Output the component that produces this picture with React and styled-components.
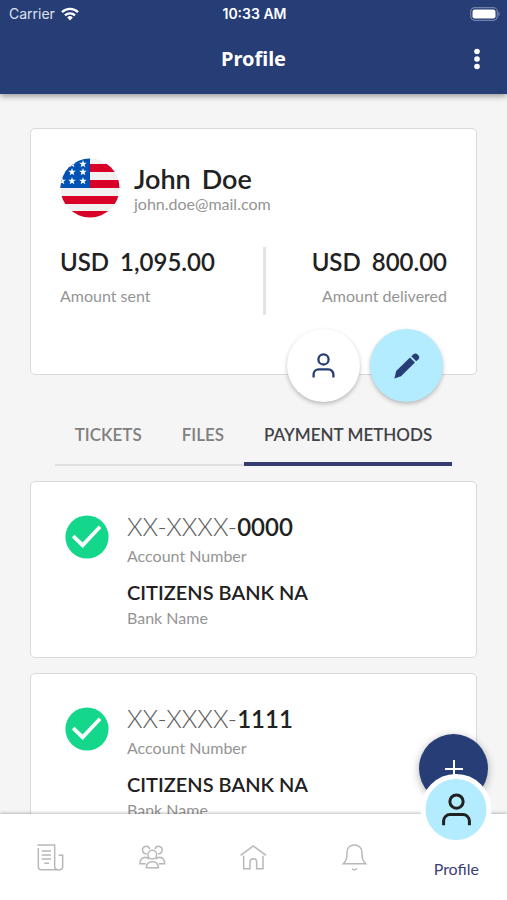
import { useState } from "react";
import styled, { createGlobalStyle } from "styled-components";

const accounts = [
  { id: 1, digits: "0000", bank: "CITIZENS BANK NA" },
  { id: 2, digits: "1111", bank: "CITIZENS BANK NA" },
];
const tabs = ["TICKETS", "FILES", "PAYMENT METHODS"];
const starPoints = [
  [12, 6],
  [23, 6],
  [12, 14],
  [23, 14],
  [2, 23],
  [12, 23],
  [23, 23],
];

export default function App() {
  const [tab, setTab] = useState("PAYMENT METHODS");
  return (
    <Screen>
      <GlobalStyle />
      <Header>
        <StatusBar>
          <Carrier>
            Carrier
            <WifiIcon />
          </Carrier>
          <Time>10:33 AM</Time>
          <BatteryIcon />
        </StatusBar>
        <TitleBar>
          <Title>Profile</Title>
          <MenuButton aria-label="More options">
            <svg width="6" height="22" viewBox="0 0 6 22" fill="#fff">
              <circle cx="3" cy="3.5" r="2.8" />
              <circle cx="3" cy="11" r="2.8" />
              <circle cx="3" cy="18.5" r="2.8" />
            </svg>
          </MenuButton>
        </TitleBar>
      </Header>
      <Content>
        <SummaryCard>
          <User>
            <FlagIcon />
            <div>
              <Name>
                <span>John</span> <span>Doe</span>
              </Name>
              <Label>john.doe@mail.com</Label>
            </div>
          </User>
          <Amounts>
            <Amount>
              <Money>
                <span>USD</span> <span>1,095.00</span>
              </Money>
              <Label>Amount sent</Label>
            </Amount>
            <Amount $right>
              <Money>
                <span>USD</span> <span>800.00</span>
              </Money>
              <Label>Amount delivered</Label>
            </Amount>
          </Amounts>
          <Actions>
            <RoundButton aria-label="View profile">
              <PersonIcon width="23" height="25" />
            </RoundButton>
            <RoundButton $filled aria-label="Edit profile">
              <PencilIcon />
            </RoundButton>
          </Actions>
        </SummaryCard>
        <Tabs role="tablist">
          {tabs.map((name) => (
            <Tab
              key={name}
              role="tab"
              aria-selected={tab === name}
              $active={tab === name}
              onClick={() => setTab(name)}
            >
              {name}
            </Tab>
          ))}
        </Tabs>
        <AccountList>
          {accounts.map((account) => (
            <AccountCard key={account.id}>
              <CheckIcon />
              <div>
                <AccountNumber>
                  XX-XXXX-<b>{account.digits}</b>
                </AccountNumber>
                <Label>Account Number</Label>
                <BankName>{account.bank}</BankName>
                <Label>Bank Name</Label>
              </div>
            </AccountCard>
          ))}
        </AccountList>
      </Content>
      <Footer>
        <AddButton aria-label="Add payment method">
          <svg width="18" height="18" viewBox="0 0 18 18" stroke="#fff" strokeWidth="2">
            <path d="M9 0v18M0 9h18" />
          </svg>
        </AddButton>
        <Nav>
          <NavItem href="#news" aria-label="News">
            <NewsIcon />
          </NavItem>
          <NavItem href="#contacts" aria-label="Contacts">
            <PeopleIcon />
          </NavItem>
          <NavItem href="#home" aria-label="Home">
            <HomeIcon />
          </NavItem>
          <NavItem href="#alerts" aria-label="Alerts">
            <BellIcon />
          </NavItem>
          <NavItem href="#profile" $active>
            <Bubble>
              <PersonIcon width="30" height="33" />
            </Bubble>
            Profile
          </NavItem>
        </Nav>
      </Footer>
    </Screen>
  );
}

function WifiIcon() {
  return (
    <svg width="18" height="14" viewBox="0 0 18 14" fill="none" stroke="#fff" strokeWidth="2.4">
      <path d="M1 5.2a11.4 11.4 0 0 1 16 0" />
      <path d="M4 8.4a7.2 7.2 0 0 1 10 0" />
      <path d="M9 13.4l-2.8-3a4 4 0 0 1 5.6 0z" fill="#fff" stroke="none" />
    </svg>
  );
}

function BatteryIcon() {
  return (
    <svg width="30" height="14" viewBox="0 0 30 14">
      <rect x="0.7" y="0.7" width="26.6" height="12.6" rx="4" fill="none" stroke="#7381a8" strokeWidth="1.2" />
      <rect x="2.5" y="2.4" width="23" height="9.2" rx="2.4" fill="#fff" />
      <path d="M28.4 4.6c1.6.6 1.6 4.2 0 4.8z" fill="#7381a8" />
    </svg>
  );
}

function FlagIcon() {
  return (
    <svg width="60" height="60" viewBox="0 0 60 60">
      <clipPath id="flag">
        <circle cx="30" cy="30" r="29.5" />
      </clipPath>
      <g clipPath="url(#flag)">
        <rect width="60" height="60" fill="#f0f0f0" />
        <path d="M0 6h60v8H0zM0 22h60v8H0zM0 38h60v8H0zM0 53h60v7H0z" fill="#d80027" />
        <rect width="30" height="30" fill="#0052b4" />
        {starPoints.map(([x, y]) => (
          <path
            key={`${x}-${y}`}
            transform={`translate(${x} ${y})`}
            d="M0-4l.95 2.75 2.9.03-2.33 1.76.86 2.8L0 1.66l-2.38 1.68.86-2.8-2.33-1.76 2.9-.03z"
            fill="#fff"
          />
        ))}
      </g>
    </svg>
  );
}

function PersonIcon({ width, height }) {
  return (
    <svg width={width} height={height} viewBox="0 0 23 25" fill="none" stroke="currentColor" strokeWidth="2.3">
      <circle cx="11.5" cy="6.4" r="5.1" />
      <path d="M1.6 24.5v-3.1a5 5 0 0 1 5-5h9.8a5 5 0 0 1 5 5v3.1" />
    </svg>
  );
}

function PencilIcon() {
  return (
    <svg width="26" height="26" viewBox="0 0 26 26" fill="currentColor">
      <path d="M.4 25.4L2.2 18 16 4.6l4.9 4.9L7 23.2z" />
      <path d="M17.3 3.3l1.9-1.9a3.2 3.2 0 0 1 4.4.1l.7.7a3.2 3.2 0 0 1 0 4.2l-2.1 1.8z" />
    </svg>
  );
}

function CheckIcon() {
  return (
    <svg width="44" height="44" viewBox="0 0 44 44">
      <circle cx="22" cy="22" r="21.6" fill="#14d78c" />
      <path d="M8.2 21.2l9.4 9L35 11.8" fill="none" stroke="#fff" strokeWidth="3.8" />
    </svg>
  );
}

function NewsIcon() {
  return (
    <NavSvg viewBox="0 0 81 81">
      <path d="M4 12v56q0 9 9 9h55q9 0 9-9V34H65M1 3h52v64q0 10 10 10M14 21h28M14 33h28M14 45h28M22 58h14" />
    </NavSvg>
  );
}

function PeopleIcon() {
  return (
    <NavSvg viewBox="0 0 81 81">
      <circle cx="40" cy="32" r="13" />
      <path d="M22 71c0-13 8-18 18-18s18 5 18 18zM23 29a11 11 0 1 1 9-14M57 29a11 11 0 1 0-9-14" />
      <path d="M20 59H3c0-11 4-17 15-19 6 0 9 2 12 6M60 59h17c0-11-4-17-15-19-6 0-9 2-12 6" />
    </NavSvg>
  );
}

function HomeIcon() {
  return (
    <NavSvg viewBox="0 0 81 81">
      <path d="M2 34L40 6l38 28M11 35v39h19V54a10 10 0 0 1 20 0v20h19V35" />
    </NavSvg>
  );
}

function BellIcon() {
  return (
    <NavSvg viewBox="0 0 81 81">
      <path d="M7 59h67c-9-10-11-15-11-33C63 12 53 3 40 3S18 12 18 26c0 18-2 23-11 33zM33 74q7 7 15 0" />
    </NavSvg>
  );
}

const GlobalStyle = createGlobalStyle`
  * {
    box-sizing: border-box;
  }
  body {
    margin: 0;
    background-color: #f5f5f5;
    font-family: Lato, sans-serif;
  }
  svg {
    display: block;
    flex-shrink: 0;
  }
  button {
    padding: 0;
    border: none;
    font-family: inherit;
    cursor: pointer;
  }
  h1, h2, p {
    margin: 0;
  }
`;
const Screen = styled.div`
  display: flex;
  flex-direction: column;
  height: 100vh;
`;
const Header = styled.header`
  position: relative;
  z-index: 1;
  padding-bottom: 4px;
  background-color: #263d76;
  color: #fff;
  box-shadow: 0 2px 6px rgba(0, 0, 0, 0.4);
`;
const StatusBar = styled.div`
  display: grid;
  grid-template-columns: 1fr auto 1fr;
  align-items: center;
  height: 27px;
  padding: 0 7px 0 9px;
  font-family: Inter, sans-serif;
  font-size: 14px;
  > :last-child {
    justify-self: end;
  }
`;
const Carrier = styled.span`
  display: flex;
  align-items: center;
  gap: 6px;
  color: #dfe3ee;
`;
const Time = styled.span`
  font-weight: 600;
`;
const TitleBar = styled.div`
  display: grid;
  grid-template-columns: 1fr auto 1fr;
  align-items: center;
  height: 63px;
  padding: 0 20px;
`;
const Title = styled.h1`
  grid-column: 2;
  font-family: "Noto Sans", sans-serif;
  font-size: 20px;
  line-height: 24px;
  font-weight: 700;
`;
const MenuButton = styled.button`
  justify-self: end;
  padding: 4px 7px;
  background: none;
`;
const Content = styled.main`
  flex: 1;
  min-height: 0;
  padding: 34px 30px;
  overflow-y: auto;
  scrollbar-width: none;
`;
const Card = styled.section`
  border: 1px solid #dadada;
  border-radius: 5px;
  background-color: #fff;
`;
const SummaryCard = styled(Card)`
  position: relative;
  padding: 29px 29px 59px;
`;
const User = styled.div`
  display: flex;
  align-items: center;
  gap: 14px;
`;
const Name = styled.h2`
  display: flex;
  gap: 11px;
  padding-top: 2px;
  color: #212121;
  font-size: 27px;
  line-height: 30px;
  font-weight: 600;
`;
const Label = styled.p`
  color: #949494;
  font-size: 16px;
  line-height: 20px;
`;
const Amounts = styled.div`
  display: grid;
  grid-template-columns: auto 1fr;
  margin-top: 29px;
`;
const Amount = styled.div`
  height: 68px;
  padding-right: ${({ $right }) => ($right ? "0" : "48px")};
  border-right: ${({ $right }) => ($right ? "none" : "3px solid #e3e3e3")};
  text-align: ${({ $right }) => ($right ? "right" : "left")};
`;
const Money = styled.p`
  display: inline-flex;
  gap: 11px;
  margin-bottom: 9px;
  color: #212121;
  font-size: 24px;
  line-height: 30px;
  font-weight: 600;
`;
const Actions = styled.div`
  position: absolute;
  right: 33px;
  bottom: -28px;
  display: flex;
  gap: 10px;
`;
const RoundButton = styled.button`
  display: flex;
  align-items: center;
  justify-content: center;
  width: 73px;
  height: 73px;
  border-radius: 50%;
  background-color: ${({ $filled }) => ($filled ? "#b3ebff" : "#fff")};
  color: #263d76;
  box-shadow: 0 2px 4px rgba(0, 0, 0, 0.25);
`;
const Tabs = styled.div`
  display: flex;
  width: fit-content;
  margin: 40px auto 15px;
  box-shadow: inset 0 -2px #e0e0e0;
`;
const Tab = styled.button`
  height: 51px;
  padding: 0 20px 7px;
  border-bottom: 4px solid ${({ $active }) => ($active ? "#343a72" : "transparent")};
  background: none;
  color: ${({ $active }) => ($active ? "#424247" : "#808080")};
  font-size: 17px;
  line-height: 22px;
  font-weight: 600;
`;
const AccountList = styled.div`
  display: grid;
  gap: 15px;
`;
const AccountCard = styled(Card)`
  display: flex;
  gap: 18px;
  padding: 28px 34px 29px;
  > svg {
    margin-top: 5px;
  }
`;
const AccountNumber = styled.p`
  margin-bottom: 3px;
  color: #606060;
  font-size: 25px;
  line-height: 32px;
  font-weight: 300;
  b {
    color: #212121;
    font-size: 24px;
    font-weight: 600;
  }
`;
const BankName = styled.p`
  margin: 14px 0 4px;
  color: #212121;
  font-size: 20px;
  line-height: 24px;
  font-weight: 600;
`;
const Footer = styled.footer`
  position: relative;
`;
const AddButton = styled.button`
  position: absolute;
  top: -80px;
  right: 19px;
  display: flex;
  align-items: center;
  justify-content: center;
  width: 69px;
  height: 69px;
  border-radius: 50%;
  background-color: #263d76;
  box-shadow: 0 2px 8px rgba(0, 0, 0, 0.3);
`;
const Nav = styled.nav`
  position: relative;
  display: grid;
  grid-template-columns: repeat(5, 1fr);
  height: 86px;
  background-color: #fff;
  box-shadow: 0 -1px 3px rgba(0, 0, 0, 0.25);
`;
const NavItem = styled.a`
  position: relative;
  display: flex;
  align-items: ${({ $active }) => ($active ? "flex-end" : "center")};
  justify-content: center;
  padding-bottom: ${({ $active }) => ($active ? "21px" : "0")};
  color: #3d4078;
  font-size: 16px;
  line-height: 20px;
  text-decoration: none;
`;
const NavSvg = styled.svg`
  width: 27px;
  height: 27px;
  fill: none;
  stroke: #b8b8b8;
  stroke-width: 4.5;
`;
const Bubble = styled.span`
  position: absolute;
  top: -40px;
  left: 50%;
  display: flex;
  align-items: center;
  justify-content: center;
  width: 71px;
  height: 71px;
  border: 5px solid #fff;
  border-radius: 50%;
  background-color: #b3ebff;
  color: #212121;
  transform: translateX(-50%);
`;
